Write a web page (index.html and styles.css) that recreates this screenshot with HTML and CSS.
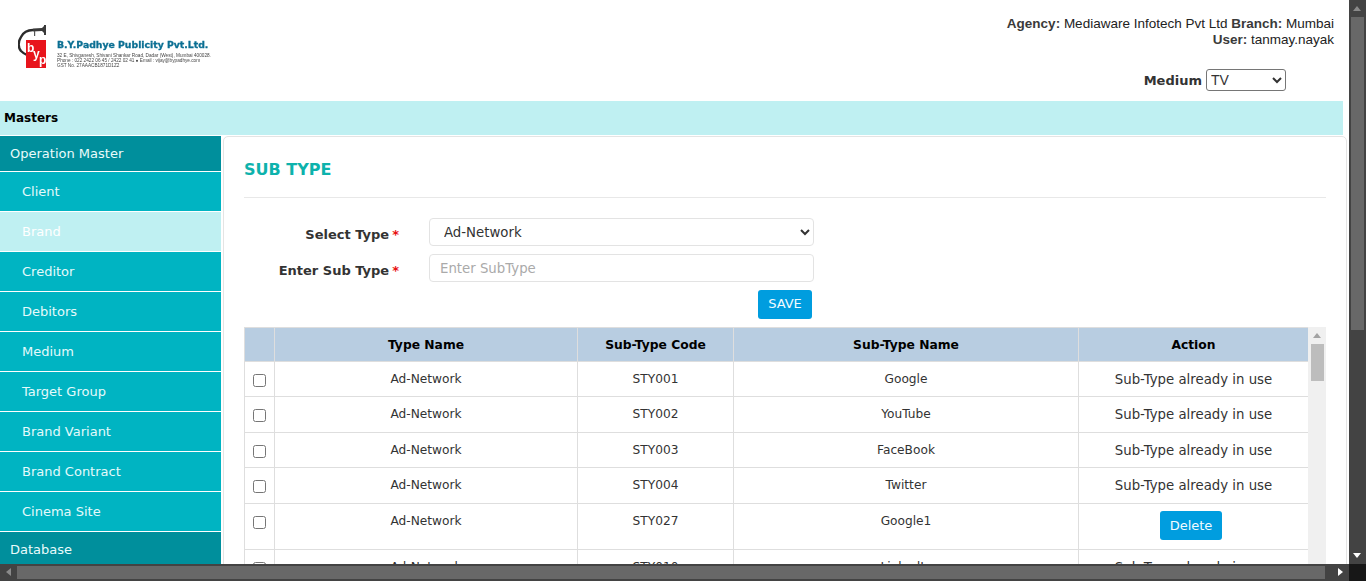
FILE: index.html
```html
<!DOCTYPE html>
<html lang="en">
<head>
    <meta charset="UTF-8">
    <meta name="viewport" content="width=device-width, initial-scale=1.0">
    <title>Sub Type</title>
    <link rel="stylesheet" href="styles.css">
</head>
<body>
<div class="screen">
    <div class="page">
        <header class="top">
            <div class="logo">
                <svg class="logo-mark" width="46" height="46" viewBox="0 0 46 46">
                    <path d="M15 5 C9 5 5 8 3 12 C0 17 0 22 3 26 C5 28 7 29 9 30" fill="none" stroke="#2b2b2b" stroke-width="2.4"/>
                    <path d="M15 3.5 L24 3 L26 1 L26 8 L24 6 L15 6.5 Z" fill="#3a3a3a"/>
                    <rect x="26" y="0" width="2" height="10" fill="#3a3a3a"/>
                    <rect x="16" y="6" width="1.2" height="5" fill="#555"/>
                    <rect x="8" y="15" width="20" height="28" fill="#e8141c"/>
                    <text x="9" y="27" class="logo-byp">b</text>
                    <text x="15" y="33" class="logo-byp">y</text>
                    <text x="21" y="39" class="logo-byp">p</text>
                </svg>
                <div class="logo-text">
                    <div class="logo-name">B.Y.Padhye Publicity Pvt.Ltd.</div>
                    <div class="logo-small">32 E, Shivganesh, Shivani Shankar Road, Dadar (West), Mumbai 400028.</div>
                    <div class="logo-small">Phone : 022 2422 06 45 / 2422 02 41 &#9679; Email : vijay@bypadhye.com</div>
                    <div class="logo-small">GST No. 27AAACB1871D1Z2</div>
                </div>
            </div>
            <div class="top-right">
                <div class="agency"><b>Agency:</b> Mediaware Infotech Pvt Ltd <b>Branch:</b> Mumbai</div>
                <div class="agency"><b>User:</b> tanmay.nayak</div>
                <div class="medium-row">
                    <label class="medium-label" for="medium">Medium</label>
                    <select class="medium-select" id="medium"><option>TV</option></select>
                </div>
            </div>
        </header>

        <div class="crumb">Masters</div>

        <div class="main">
            <nav class="side">
                <a class="side-head">Operation Master</a>
                <a class="side-item">Client</a>
                <a class="side-item active">Brand</a>
                <a class="side-item">Creditor</a>
                <a class="side-item">Debitors</a>
                <a class="side-item">Medium</a>
                <a class="side-item">Target Group</a>
                <a class="side-item">Brand Variant</a>
                <a class="side-item">Brand Contract</a>
                <a class="side-item">Cinema Site</a>
                <a class="side-head">Database</a>
            </nav>

            <section class="card">
                <h2 class="card-title">SUB TYPE</h2>

                <div class="form-row">
                    <label class="form-label">Select Type<span class="req">*</span></label>
                    <select class="form-control form-select"><option>Ad-Network</option></select>
                </div>
                <div class="form-row">
                    <label class="form-label">Enter Sub Type<span class="req">*</span></label>
                    <input class="form-control form-input" type="text" placeholder="Enter SubType">
                </div>
                <div class="save-row"><button class="btn btn-save">SAVE</button></div>

                <div class="table-wrap">
                    <table class="grid">
                        <colgroup>
                            <col class="c-check"><col class="c-type"><col class="c-code"><col class="c-name"><col class="c-action">
                        </colgroup>
                        <thead>
                            <tr><th></th><th>Type Name</th><th>Sub-Type Code</th><th>Sub-Type Name</th><th>Action</th></tr>
                        </thead>
                        <tbody>
                            <tr class="h35"><td class="tick"><input type="checkbox"></td><td>Ad-Network</td><td>STY001</td><td>Google</td><td class="use">Sub-Type already in use</td></tr>
                            <tr class="h36"><td class="tick"><input type="checkbox"></td><td>Ad-Network</td><td>STY002</td><td>YouTube</td><td class="use">Sub-Type already in use</td></tr>
                            <tr class="h35"><td class="tick"><input type="checkbox"></td><td>Ad-Network</td><td>STY003</td><td>FaceBook</td><td class="use">Sub-Type already in use</td></tr>
                            <tr class="h36"><td class="tick"><input type="checkbox"></td><td>Ad-Network</td><td>STY004</td><td>Twitter</td><td class="use">Sub-Type already in use</td></tr>
                            <tr class="h46"><td class="tick tick-top"><input type="checkbox"></td><td class="top-cell">Ad-Network</td><td class="top-cell">STY027</td><td class="top-cell">Google1</td><td class="del-cell"><button class="btn btn-del">Delete</button></td></tr>
                            <tr class="h36"><td class="tick"><input type="checkbox"></td><td>Ad-Network</td><td>STY010</td><td>LinkedIn</td><td class="use">Sub-Type already in use</td></tr>
                        </tbody>
                    </table>
                    <div class="mini-bar">
                        <span class="mini-up"></span>
                        <span class="mini-thumb"></span>
                    </div>
                </div>
            </section>
        </div>
    </div>

    <div class="vbar">
        <span class="arrow arrow-up"></span>
        <span class="vthumb"></span>
        <span class="arrow arrow-down"></span>
    </div>
    <div class="hbar">
        <span class="arrow arrow-left"></span>
        <span class="hthumb"></span>
        <span class="arrow arrow-right"></span>
    </div>
    <div class="corner"></div>
</div>
</body>
</html>
```

FILE: styles.css
```css
* {
    box-sizing: border-box;
}
html, body {
    margin: 0;
    height: 581px;
    overflow: hidden;
}
body {
    font-family: "DejaVu Sans", Verdana, sans-serif;
    font-size: 13px;
    color: #333;
    background-color: #fff;
}
.screen {
    display: grid;
    grid-template-columns: 1349px 17px;
    grid-template-rows: 564px 17px;
    height: 581px;
}
.page {
    overflow: hidden;
    background-color: #fff;
}

/* header */
.top {
    display: flex;
    justify-content: space-between;
    height: 101px;
    padding: 16px 15px 0 18px;
}
.logo {
    display: flex;
    align-items: flex-start;
    padding-top: 9px;
    filter: blur(0.3px);
}
.logo-mark {
    flex: none;
}
.logo-byp {
    font-family: "Liberation Sans", sans-serif;
    font-size: 12px;
    font-weight: bold;
    fill: #fff;
}
.logo-text {
    margin: 14px 0 0 -7px;
    font-family: "DejaVu Sans", sans-serif;
}
.logo-name {
    width: 152px;
    font-size: 9.3px;
    font-weight: bold;
    color: #0b6f93;
    -webkit-text-stroke: 0.3px #0b6f93;
    line-height: 11px;
    margin-bottom: 3px;
    white-space: nowrap;
}
.logo-small {
    font-family: "Liberation Sans", sans-serif;
    font-size: 4.7px;
    line-height: 5px;
    color: #444;
    white-space: nowrap;
}
.top-right {
    font-family: "Liberation Sans", Arial, sans-serif;
    font-size: 13.5px;
    text-align: right;
}
.agency {
    line-height: 16px;
    color: #222;
}
.agency b {
    color: #3a3a3a;
}
.medium-row {
    display: flex;
    justify-content: flex-end;
    align-items: center;
    gap: 4px;
    margin: 21px 48px 0 0;
}
.medium-label {
    font-family: "DejaVu Sans", Verdana, sans-serif;
    font-size: 13px;
    font-weight: bold;
}
.medium-select {
    width: 80px;
    height: 22px;
    font-family: "Liberation Sans", Arial, sans-serif;
    font-size: 14px;
    background-color: #fff;
    color: #333;
    border: 1px solid #767676;
    border-radius: 3px;
}

.crumb {
    width: 1343px;
    height: 34px;
    padding-left: 4px;
    line-height: 34px;
    font-size: 12px;
    font-weight: bold;
    color: #000;
    background-color: #bff0f2;
}

.main {
    display: flex;
    align-items: flex-start;
    padding-top: 1px;
}

/* left menu */
.side {
    flex: none;
    display: flex;
    flex-direction: column;
    width: 221px;
}
.side-head {
    height: 36px;
    padding-left: 10px;
    line-height: 35px;
    color: #e9fbfb;
    background-color: #008f9c;
    border-bottom: 1px solid #fff;
}
.side-item {
    height: 40px;
    padding-left: 22px;
    line-height: 40px;
    color: #e4fafb;
    background-color: #00b4c2;
    border-bottom: 1px solid #fff;
}
.side-item.active {
    background-color: #bff0f2;
    color: #fff;
}

/* card */
.card {
    width: 1124px;
    margin-left: 2px;
    padding: 1px 20px 0;
    height: 500px;
    border: 1px solid #e4e4e4;
    border-radius: 5px;
}
.card-title {
    margin: 0 0 20px;
    height: 60px;
    padding-top: 22px;
    font-size: 16px;
    line-height: 20px;
    font-weight: bold;
    color: #0db2ac;
    border-bottom: 1px solid #e8e8e8;
}
.form-row {
    display: flex;
    align-items: center;
    height: 28px;
    margin-bottom: 8px;
}
.form-label {
    width: 155px;
    margin-right: 30px;
    padding-top: 4px;
    text-align: right;
    font-weight: bold;
    white-space: nowrap;
}
.req {
    color: #e81010;
    margin-left: 3px;
}
.form-control {
    width: 385px;
    height: 28px;
    font-family: "DejaVu Sans", Verdana, sans-serif;
    font-size: 13.3px;
    color: #333;
    background-color: #fff;
    border: 1px solid #e3e3e3;
    border-radius: 4px;
}
.form-select {
    padding-left: 10px;
}
.form-input {
    padding: 0 10px;
}
.form-input::placeholder {
    color: #aaa;
}
.save-row {
    display: flex;
    margin-bottom: 8px;
    padding-left: 514px;
}
.btn {
    border: none;
    border-radius: 3px;
    color: #f2fbff;
    background-color: #009ddf;
    font-family: "DejaVu Sans", Verdana, sans-serif;
    font-size: 13px;
}
.btn-save {
    width: 54px;
    height: 29px;
    padding: 0 0 3px;
}
.btn-del {
    width: 62px;
    height: 29px;
    padding: 0;
    margin-right: 5px;
    vertical-align: top;
}

/* table */
.table-wrap {
    position: relative;
    width: 1082px;
    height: 300px;
    overflow: hidden;
}
.grid {
    table-layout: fixed;
    width: 1065px;
    border-collapse: collapse;
    border-top: 1px solid #dedede;
    border-left: 1px solid #dedede;
    font-size: 12.2px;
}
.c-check { width: 30px; }
.c-type { width: 303px; }
.c-code { width: 156px; }
.c-name { width: 345px; }
.c-action { width: 230px; }
.grid th {
    height: 34px;
    padding: 0;
    color: #000;
    font-size: 12.3px;
    font-weight: bold;
    background-color: #b8cde1;
    border: 1px solid #dedede;
}
.grid td {
    padding: 0 0 2px;
    text-align: center;
    border: 1px solid #dedede;
}
.grid .h35 td {
    padding-bottom: 0;
}
.grid .use {
    padding: 0;
    font-size: 13.3px;
}
.grid .h35 .tick, .grid .tick {
    padding: 1px 0 0;
}
.grid .tick-top {
    padding: 11px 0 0;
    vertical-align: top;
}
.grid .top-cell {
    padding: 0 0 12px;
}
.grid .del-cell {
    padding: 0 0 2px;
}
.grid input[type=checkbox] {
    width: 13px;
    height: 13px;
    margin: 0;
    vertical-align: middle;
}
.h35 { height: 35px; }
.h36 { height: 36px; }
.h46 { height: 46px; }

.mini-bar {
    position: absolute;
    top: 0;
    right: 0;
    width: 18px;
    height: 300px;
    background-color: #f0f0f0;
}
.mini-up {
    position: absolute;
    top: 6px;
    left: 5px;
    border: 4px solid transparent;
    border-top: none;
    border-bottom: 5px solid #a3a3a3;
}
.mini-thumb {
    position: absolute;
    top: 17px;
    left: 3px;
    width: 13px;
    height: 37px;
    background-color: #bdbdbd;
}

/* window scrollbars */
.vbar, .hbar {
    position: relative;
    background-color: #434343;
}
.vthumb {
    position: absolute;
    top: 17px;
    left: 2px;
    width: 13px;
    height: 313px;
    background-color: #686868;
}
.hthumb {
    position: absolute;
    top: 2px;
    left: 17px;
    width: 1308px;
    height: 13px;
    background-color: #686868;
}
.corner {
    background-color: #171717;
}
.arrow {
    position: absolute;
    width: 0;
    height: 0;
    border: 4px solid transparent;
}
.arrow-up {
    top: 6px;
    left: 4px;
    border-top: none;
    border-bottom: 5px solid #8a8a8a;
}
.arrow-down {
    bottom: 6px;
    left: 4px;
    border-bottom: none;
    border-top: 5px solid #fff;
}
.arrow-left {
    top: 4px;
    left: 6px;
    border-left: none;
    border-right: 5px solid #8a8a8a;
}
.arrow-right {
    top: 4px;
    right: 6px;
    border-right: none;
    border-left: 5px solid #fff;
}
```
